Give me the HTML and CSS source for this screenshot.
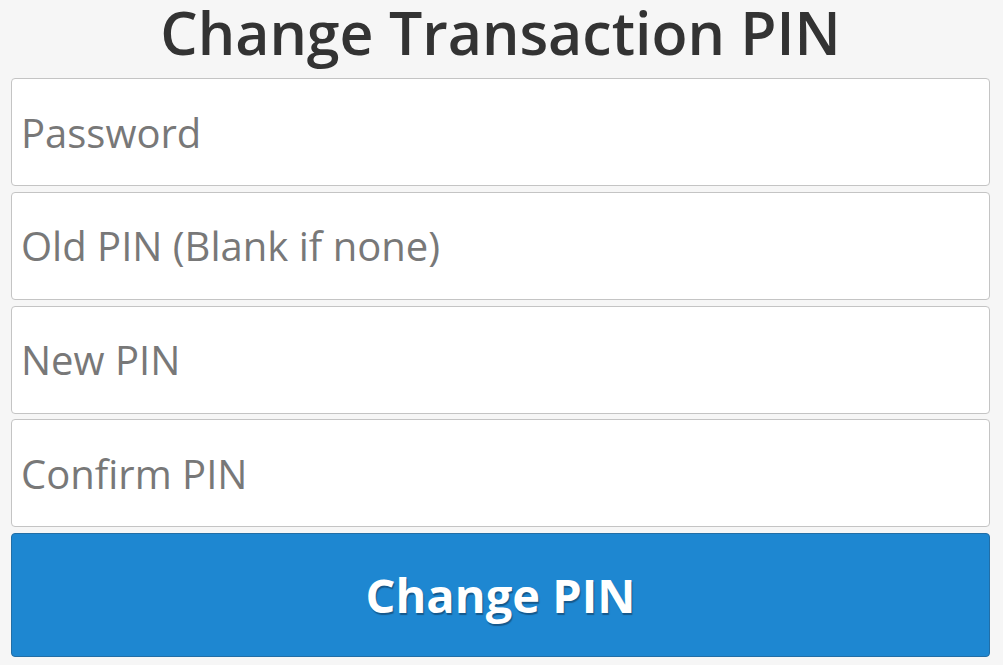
FILE: index.html
```html
<!DOCTYPE html>
<html lang="en">
<head>
    <meta charset="UTF-8">
    <meta name="viewport" content="width=device-width, initial-scale=1.0">
    <title>Change Transaction PIN</title>
    <link rel="stylesheet" href="styles.css">
</head>
<body>
    <div class="page">
        <h1>Change Transaction PIN</h1>
        <form id="pin-form" class="pin-form">
            <input type="password" name="password" placeholder="Password">
            <input type="password" name="old_pin" placeholder="Old PIN (Blank if none)">
            <input type="password" name="new_pin" placeholder="New PIN">
            <input type="password" name="confirm_pin" placeholder="Confirm PIN">
            <button type="submit">Change PIN</button>
        </form>
    </div>
</body>
</html>
```

FILE: styles.css
```css
body {
    margin: 0;
    background: #f6f6f6;
    font-family: 'Open Sans', 'DejaVu Sans', sans-serif;
    color: #333;
}
.page {
    padding: 0 13px 0 11px;
}
h1 {
    margin: 0 0 14px;
    font-size: 59px;
    line-height: 64px;
    font-weight: 600;
    text-align: center;
    color: #333;
}
.pin-form {
    display: flex;
    flex-direction: column;
    gap: 5.75px;
}
input {
    height: 108px;
    box-sizing: border-box;
    margin: 0;
    padding: 0 9px;
    border: 1px solid #c4c4c4;
    border-radius: 4px;
    background: #fff;
    font-family: inherit;
    font-size: 40px;
    color: #333;
    outline: none;
}
input::placeholder {
    color: #787878;
}
button {
    height: 124px;
    box-sizing: border-box;
    margin: 0;
    border: 1px solid #226ea6;
    border-radius: 4px;
    background: #1e87d1;
    color: #fff;
    font-family: inherit;
    font-size: 47px;
    font-weight: 700;
    text-shadow: 1px 2px 1px #16598c;
    cursor: pointer;
}
```
